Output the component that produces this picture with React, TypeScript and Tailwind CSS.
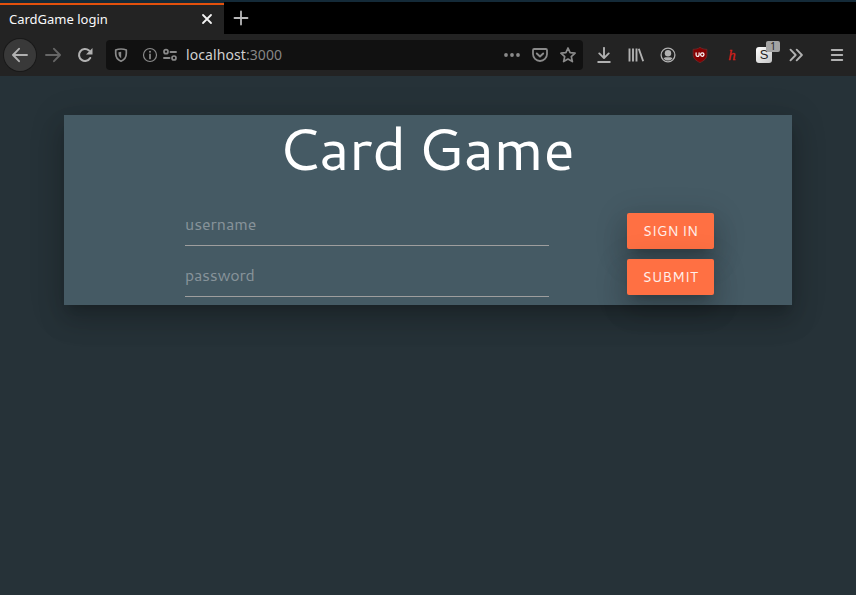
import React from "react";

const ui = "font-['Noto_Sans',sans-serif]";
const page = "font-['Cantarell','Noto_Sans',sans-serif]";
const depth =
  "shadow-[0_16px_24px_2px_rgba(0,0,0,0.14),0_6px_30px_5px_rgba(0,0,0,0.12),0_8px_10px_-7px_rgba(0,0,0,0.2)]";

function Icon({ children, className = "" }: { children: React.ReactNode; className?: string }) {
  return (
    <svg
      viewBox="0 0 16 16"
      className={`size-4 shrink-0 ${className}`}
      fill="none"
      stroke="currentColor"
      strokeWidth="2"
      strokeLinecap="round"
      strokeLinejoin="round"
    >
      {children}
    </svg>
  );
}

function Cell({ children }: { children: React.ReactNode }) {
  return <div className="relative flex size-8 shrink-0 items-center justify-center">{children}</div>;
}

function TabBar() {
  return (
    <div className="flex h-[34px] bg-black">
      <div className="flex w-[224px] flex-col">
        <div className="h-[3px] bg-[#142a38]" />
        <div className="flex flex-1 items-center justify-between border-t-2 border-[#e2500c] bg-[#232323] pr-[11px] pb-px pl-[9px]">
          <span className="text-[13px] leading-5 text-[#f9f9fa]">CardGame login</span>
          <svg viewBox="0 0 12 12" className="size-3 text-[#f4f4f4]" stroke="currentColor" strokeWidth="1.8" strokeLinecap="round">
            <path d="M2 2l8 8M10 2l-8 8" />
          </svg>
        </div>
      </div>
      <div className="flex flex-1 items-center border-t-2 border-[#142a38] pl-[9px] text-[#b9b9ba]">
        <Icon>
          <path d="M8 1.5v13M1.5 8h13" strokeWidth="1.8" />
        </Icon>
      </div>
    </div>
  );
}

function AddressBar() {
  return (
    <div className="ml-[5px] flex h-[30px] w-[477px] items-center rounded bg-[#111] pl-[7px] text-[#8a8a8a]">
      <Icon>
        <path d="M8 2c1.900 0 3.900.4 5.300 1v3.500c0 3.700-2 6.300-5.300 7.700-3.300-1.400-5.300-4-5.300-7.700V3C4.100 2.400 6.100 2 8 2z" strokeWidth="1.700" />
        <path d="M8.200 4.800v6.400C6.500 10.200 5.500 8.600 5.500 6.500V5.200z" fill="currentColor" stroke="none" />
      </Icon>
      <Icon className="ml-[13px]">
        <circle cx="8" cy="8" r="6.500" strokeWidth="1.200" />
        <path d="M8 7.400v4" strokeWidth="1.700" />
        <circle cx="8" cy="4.700" r="1" fill="currentColor" stroke="none" />
      </Icon>
      <Icon className="ml-1">
        <circle cx="4" cy="4.700" r="2" strokeWidth="1.700" />
        <path d="M8.500 5h5.500M2 11h5.500" strokeWidth="1.900" />
        <circle cx="12" cy="11" r="2" strokeWidth="1.700" />
      </Icon>
      <span className="ml-2 text-[14px] leading-5 tracking-[0.08px] text-[#868686]">
        <span className="text-[#d0d0d0]">localhost</span>:3000
      </span>
      <div className="ml-auto flex gap-3 pr-[7px]">
        <Icon>
          <g fill="currentColor" stroke="none">
            <circle cx="2" cy="8" r="1.900" />
            <circle cx="8" cy="8" r="1.900" />
            <circle cx="14" cy="8" r="1.900" />
          </g>
        </Icon>
        <Icon>
          <path d="M2.200 2h11.600c.7 0 1.200.5 1.200 1.200V7a7 7 0 0 1-14 0V3.200C1 2.500 1.500 2 2.200 2z" strokeWidth="1.800" />
          <path d="M4.800 6.500L8 9.500l3.200-3" strokeWidth="1.900" />
        </Icon>
        <Icon>
          <path d="M8 1l2.100 4.700 5 .5-3.800 3.400 1.100 5L8 12l-4.400 2.600 1.100-5L.9 6.200l5-.5z" strokeWidth="1.700" />
        </Icon>
      </div>
    </div>
  );
}

function Toolbar() {
  return (
    <div className="flex h-[42px] items-center bg-[#232323] pl-1 text-[#b1b1b1]">
      <div className="flex size-8 shrink-0 items-center justify-center rounded-full bg-[#393939] shadow-[0_0_0_1px_#191919]">
        <Icon>
          <path d="M15 8H1.200M7 1.800L1 8l6 6.200" strokeWidth="1.900" />
        </Icon>
      </div>
      <div className="ml-px flex text-[#666]">
        <Cell>
          <Icon>
            <path d="M1 8h13.800M9 1.800L15 8l-6 6.200" strokeWidth="1.900" />
          </Icon>
        </Cell>
      </div>
      <Cell>
        <Icon>
          <path d="M13.200 11A6 6 0 1 1 12 3.500" strokeWidth="2.100" />
          <path d="M15.500 1v6.500H9z" fill="currentColor" stroke="none" />
        </Icon>
      </Cell>
      <AddressBar />
      <div className="ml-[5px] flex">
        <Cell>
          <Icon>
            <path d="M8 .9v10M3.300 6.400L8 11.100l4.700-4.700M2.200 15h11.600" strokeWidth="1.900" />
          </Icon>
        </Cell>
        <Cell>
          <Icon>
            <path d="M1.500 1.500v13M5 1.500v13M8.500 1.500v13M10.800 1.800l4.400 12.500" strokeWidth="1.900" strokeLinecap="butt" />
          </Icon>
        </Cell>
        <Cell>
          <Icon>
            <circle cx="8" cy="8" r="6.900" strokeWidth="1.300" />
            <circle cx="8" cy="6.300" r="3.200" fill="currentColor" stroke="none" />
            <path d="M3.500 11.200c1-.9 2-1 2.700-1h3.600c.7 0 1.700.1 2.700 1-1 1.500-2.600 2.300-4.500 2.300s-3.500-.8-4.500-2.300z" fill="currentColor" stroke="none" />
          </Icon>
        </Cell>
        <Cell>
          <Icon>
            <path d="M8 .4c1.800 1.300 4.200 1.900 6.900 1.900v5.200c0 4-2.700 6-6.900 8.100-4.200-2.100-6.900-4.100-6.900-8.100V2.300C3.800 2.300 6.200 1.700 8 .4z" fill="#850000" stroke="#703030" strokeWidth=".7" />
            <path d="M4.100 5.800v2.100a1.500 1.500 0 0 0 3 0V5.800" stroke="#fff" strokeWidth="1.200" />
            <circle cx="10.300" cy="7.600" r="1.700" stroke="#fff" strokeWidth="1.200" />
          </Icon>
        </Cell>
        <Cell>
          <span className="font-['Liberation_Serif',serif] text-[15px] leading-4 text-[#d4201c] italic [-webkit-text-stroke:0.3px_#d4201c]">h</span>
        </Cell>
        <Cell>
          <span className="flex size-4 items-center justify-center rounded-[3px] bg-gradient-to-br from-white to-[#c4c4c4] font-['Liberation_Sans',sans-serif] text-[13px] leading-4 text-[#222]">
            S
          </span>
          <span className="absolute top-[2px] right-0 flex h-[11px] w-[14px] items-center justify-center rounded-[2px] bg-[#a3a3a3] text-[10px] leading-[11px] text-[#222]">
            1
          </span>
        </Cell>
        <Cell>
          <Icon>
            <path d="M2.500 2.700L7.700 8l-5.200 5.300M8.700 2.700L13.900 8l-5.200 5.300" strokeWidth="1.900" />
          </Icon>
        </Cell>
      </div>
      <div className="ml-[9px]">
        <Cell>
          <Icon>
            <path d="M2.800 3h10.400M2.800 8h10.400M2.800 13h10.400" />
          </Icon>
        </Cell>
      </div>
    </div>
  );
}

function Field({ label, type, spacing }: { label: string; type: string; spacing: string }) {
  return (
    <input
      type={type}
      placeholder={label}
      className={`block h-[43px] w-[364px] border-b border-[#9e9e9e] bg-transparent pb-[2px] text-[16px] text-white outline-none placeholder:text-[#87939a] placeholder:opacity-100 ${spacing}`}
    />
  );
}

function Button({ label, spacing }: { label: string; spacing: string }) {
  return (
    <button className={`flex h-9 w-[87px] items-center justify-center rounded-[2px] bg-[#ff7043] text-[13.5px] text-white/90 ${spacing} ${depth}`}>
      {label}
    </button>
  );
}

export default function App() {
  return (
    <div className={`flex h-[595px] w-[856px] flex-col overflow-hidden bg-[#263238] ${ui}`}>
      <TabBar />
      <Toolbar />
      <main className={`flex flex-1 flex-col items-center pt-[39px] ${page}`}>
        <section className={`h-[190px] w-[728px] bg-[#455a64] ${depth}`}>
          <h1 className="h-[68px] pr-1 text-center text-[59px] leading-[64px] tracking-[-0.3px] text-white [word-spacing:-4px]">Card Game</h1>
          <form className="flex items-start pt-5 pl-[121px]">
            <div className="flex flex-col gap-2">
              <Field label="username" type="text" spacing="tracking-[-0.05px]" />
              <Field label="password" type="password" spacing="tracking-[-0.25px]" />
            </div>
            <div className="mt-[10px] ml-[78px] flex flex-col gap-[10px]">
              <Button label="SIGN IN" spacing="tracking-[0.1px]" />
              <Button label="SUBMIT" spacing="tracking-[0.3px]" />
            </div>
          </form>
        </section>
      </main>
    </div>
  );
}
